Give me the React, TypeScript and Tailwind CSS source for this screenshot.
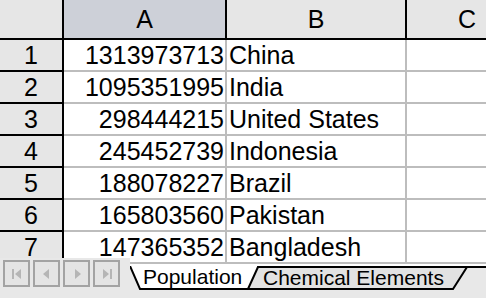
import React from 'react';

const rows: [string, string][] = [
  ['1313973713', 'China'],
  ['1095351995', 'India'],
  ['298444215', 'United States'],
  ['245452739', 'Indonesia'],
  ['188078227', 'Brazil'],
  ['165803560', 'Pakistan'],
  ['147365352', 'Bangladesh'],
];

// small grey arrow buttons at the bottom left (disabled look)
const NavButton: React.FC<{ kind: 'first' | 'prev' | 'next' | 'last' }> = ({ kind }) => (
  <div className="w-[27px] h-[27px] border-2 border-[#a3a3a3] bg-[#e4e4e4] flex items-center justify-center">
    <svg width="14" height="12" viewBox="0 0 14 12">
      {kind === 'first' && (
        <>
          <rect x="2" y="1" width="2" height="10" fill="#b5b5b5" />
          <polygon points="11,1 11,11 5,6" fill="#b5b5b5" />
        </>
      )}
      {kind === 'prev' && <polygon points="9,1 9,11 3,6" fill="#b5b5b5" />}
      {kind === 'next' && <polygon points="5,1 5,11 11,6" fill="#b5b5b5" />}
      {kind === 'last' && (
        <>
          <polygon points="3,1 3,11 9,6" fill="#b5b5b5" />
          <rect x="10" y="1" width="2" height="10" fill="#b5b5b5" />
        </>
      )}
    </svg>
  </div>
);

const App: React.FC = () => {
  return (
    <div className="w-[486px] h-[298px] overflow-hidden bg-white flex flex-col font-['Liberation_Sans',Arial,sans-serif] text-black">
      {/* Sheet grid */}
      <div className="h-[266px] overflow-hidden shrink-0">
        <div className="grid grid-cols-[64px_163px_180px_120px] w-[527px]">
          {/* column headers */}
          <div className="h-[40px] bg-[#e6e6e6] border-r-2 border-b-2 border-black" />
          <div className="h-[40px] bg-[#cdd0d8] border-r-2 border-b-2 border-black flex items-center justify-center text-[25px] leading-none">A</div>
          <div className="h-[40px] bg-[#e6e6e6] border-r-2 border-b-2 border-black flex items-center justify-center text-[25px] leading-none">B</div>
          <div className="h-[40px] bg-[#e6e6e6] border-b-2 border-black flex items-center justify-center text-[25px] leading-none">C</div>

          {rows.map(([num, name], i) => (
            <React.Fragment key={i}>
              <div className="h-[32px] bg-[#e6e6e6] border-r-2 border-b-2 border-black flex items-center justify-center text-[25px] leading-none">
                {i + 1}
              </div>
              <div className="h-[32px] border-r-2 border-b-2 border-[#bdbdbd] flex items-center justify-end pr-[1px] text-[25px] leading-none">
                {num}
              </div>
              <div className="h-[32px] border-r-2 border-b-2 border-[#bdbdbd] flex items-center pl-[2px] text-[25px] leading-none whitespace-nowrap">
                {name}
              </div>
              <div className="h-[32px] border-b-2 border-[#bdbdbd]" />
            </React.Fragment>
          ))}
        </div>
      </div>

      {/* Sheet tab bar */}
      <div className="flex h-[32px] shrink-0">
        <div className="w-[130px] h-[40px] mt-[-8px] bg-[#e8e8e8] flex items-start gap-[3px] pl-[3px] pt-[2px] relative z-10">
          <NavButton kind="first" />
          <NavButton kind="prev" />
          <NavButton kind="next" />
          <NavButton kind="last" />
        </div>
        <div className="flex-1 relative bg-[#e8e8e8]">
          <svg className="absolute inset-0" width="356" height="32" viewBox="0 0 356 32">
            <line x1="0" y1="1" x2="356" y2="1" stroke="#000" strokeWidth="2" />
            <polygon points="0,-1 10,23 118,23 128,-1" fill="#fff" />
            <polyline points="0,0 10,23 118,23" fill="none" stroke="#000" strokeWidth="2" />
            <polygon points="118,23 128,1 337,1 323,23" fill="#e2e2e2" stroke="#000" strokeWidth="2" />
          </svg>
          <div className="relative flex text-[21px] leading-none whitespace-nowrap">
            <span className="w-[128px] pl-[13px]">Population</span>
            <span className="pl-[5px] pt-[1px]">Chemical Elements</span>
          </div>
        </div>
      </div>
    </div>
  );
};

export default App;
